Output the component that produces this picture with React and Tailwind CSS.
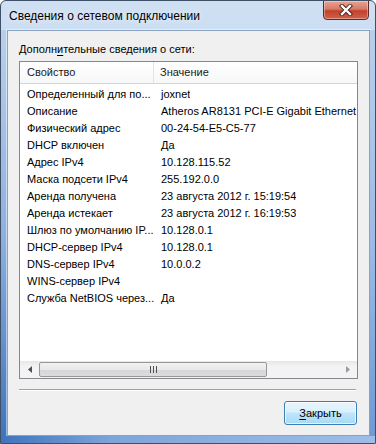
import React from "react";

const rows = [
  ["Определенный для по...", "joxnet"],
  ["Описание", "Atheros AR8131 PCI-E Gigabit Ethernet Controller (NDIS 6.20)"],
  ["Физический адрес", "00-24-54-E5-C5-77"],
  ["DHCP включен", "Да"],
  ["Адрес IPv4", "10.128.115.52"],
  ["Маска подсети IPv4", "255.192.0.0"],
  ["Аренда получена", "23 августа 2012 г. 15:19:54"],
  ["Аренда истекает", "23 августа 2012 г. 16:19:53"],
  ["Шлюз по умолчанию IP...", "10.128.0.1"],
  ["DHCP-сервер IPv4", "10.128.0.1"],
  ["DNS-сервер IPv4", "10.0.0.2"],
  ["WINS-сервер IPv4", ""],
  ["Служба NetBIOS через...", "Да"],
];

function CloseGlyph() {
  return (
    <svg width="14" height="12" viewBox="0 0 14 12">
      <path d="M3 2 L11 10 M11 2 L3 10" stroke="#4a1f1a" strokeWidth="4.2" strokeLinecap="square" />
      <path d="M3 2 L11 10 M11 2 L3 10" stroke="#ffffff" strokeWidth="2.4" strokeLinecap="square" />
    </svg>
  );
}

export default function App() {
  return (
    <div
      className="w-[376px] h-[444px] flex flex-col border border-[#3f4f66] rounded-t-[6px] overflow-hidden bg-[linear-gradient(to_bottom,#cfe0f3_0%,#bed4ee_40%,#a3c1e7_100%)]"
      style={{ fontFamily: '"Liberation Sans", Arial, sans-serif' }}
    >
      {/* title bar */}
      <div className="h-[29px] flex items-start justify-between shrink-0">
        <div className="pl-[8px] pt-[7px] text-[12px] leading-[16px] text-black [text-shadow:0_0_6px_rgba(255,255,255,0.9)]">
          Сведения о сетевом подключении
        </div>
        <div className="mr-[6px] mt-[-1px] w-[46px] h-[20px] rounded-b-[4px] border border-[#5b2b26] flex items-center justify-center bg-[linear-gradient(to_bottom,#e8a493_0%,#d77a66_45%,#c2402b_55%,#d2634b_100%)] shadow-[inset_0_0_0_1px_rgba(255,255,255,0.35)]">
          <CloseGlyph />
        </div>
      </div>

      <div className="flex flex-1 min-h-0">
        <div className="w-[6px] shrink-0 bg-[linear-gradient(to_bottom,#b8cfeb_0%,#8fb1df_50%,#3f74bd_100%)]" />
        {/* client area */}
        <div className="flex-1 flex flex-col border border-[#8aa2c0] bg-[#f0f0f0] shadow-[0_0_0_1px_rgba(255,255,255,0.5)] px-[11px] pt-[10px]">
          <div className="text-[11px] leading-[16px] text-black">
            Дополн<span className="underline underline-offset-2">и</span>тельные сведения о сети:
          </div>
          {/* list box */}
          <div className="mt-[4px] h-[318px] w-[339px] border border-[#828790] bg-white flex flex-col overflow-hidden">
            <div className="h-[22px] flex shrink-0 border-b border-[#d5d5d5] bg-[linear-gradient(to_bottom,#ffffff,#f6f7f8)] text-[11px] text-[#1a1a1a]">
              <div className="w-[134px] pl-[7px] flex items-center border-r border-[#e2e3e5]">Свойство</div>
              <div className="flex-1 pl-[6px] flex items-center">Значение</div>
            </div>
            <div className="flex-1 flex flex-col pt-[2px] text-[11px] text-black">
              {rows.map(([k, v], i) => (
                <div key={i} className="h-[17px] flex items-center whitespace-nowrap">
                  <div className="w-[134px] pl-[7px] overflow-hidden shrink-0">{k}</div>
                  <div className="pl-[7px] overflow-hidden">{v}</div>
                </div>
              ))}
            </div>
            {/* horizontal scrollbar */}
            <div className="h-[17px] shrink-0 flex items-center bg-[linear-gradient(to_bottom,#e6e6e6,#f3f3f3_30%,#f3f3f3)]">
              <div className="w-[19px] h-full flex items-center justify-center">
                <svg width="4" height="7" viewBox="0 0 4 7"><path d="M4 0 L0 3.5 L4 7 Z" fill="#505050" /></svg>
              </div>
              <div className="w-[228px] h-[15px] rounded-[2px] border border-[#979797] bg-[linear-gradient(to_bottom,#f2f2f2,#e8e8e8_50%,#d6d6d6_51%,#dcdcdc)] flex items-center justify-center">
                <svg width="7" height="7" viewBox="0 0 7 7">
                  <path d="M0.5 0 V7 M3.5 0 V7 M6.5 0 V7" stroke="#505050" strokeWidth="1" />
                </svg>
              </div>
              <div className="flex-1" />
              <div className="w-[19px] h-full flex items-center justify-center">
                <svg width="4" height="7" viewBox="0 0 4 7"><path d="M0 0 L4 3.5 L0 7 Z" fill="#9a9a9a" /></svg>
              </div>
            </div>
          </div>
          <div className="mt-[10px] w-[337px] h-[2px] border-t border-[#a0a0a0] border-b border-b-white" />
          <div className="mt-[10px] flex justify-end pr-[1px]">
            <div className="w-[73px] h-[24px] rounded-[3px] border border-[#3c7fb1] bg-[linear-gradient(to_bottom,#eaf6fd_0%,#d9f0fc_45%,#bee6fd_50%,#a7d9f5_100%)] shadow-[inset_0_0_0_1px_rgba(255,255,255,0.7)] flex items-center justify-center text-[11px] text-black">
              <span><span className="underline underline-offset-2">З</span>акрыть</span>
            </div>
          </div>
        </div>
        <div className="w-[6px] shrink-0 bg-[linear-gradient(to_bottom,#b8cfeb_0%,#9dbde6_50%,#6f9ad3_100%)]" />
      </div>
      <div className="h-[7px] shrink-0 bg-[linear-gradient(to_right,#3f74bd,#7ea5d9_30%,#9dbde6)]" />
    </div>
  );
}
